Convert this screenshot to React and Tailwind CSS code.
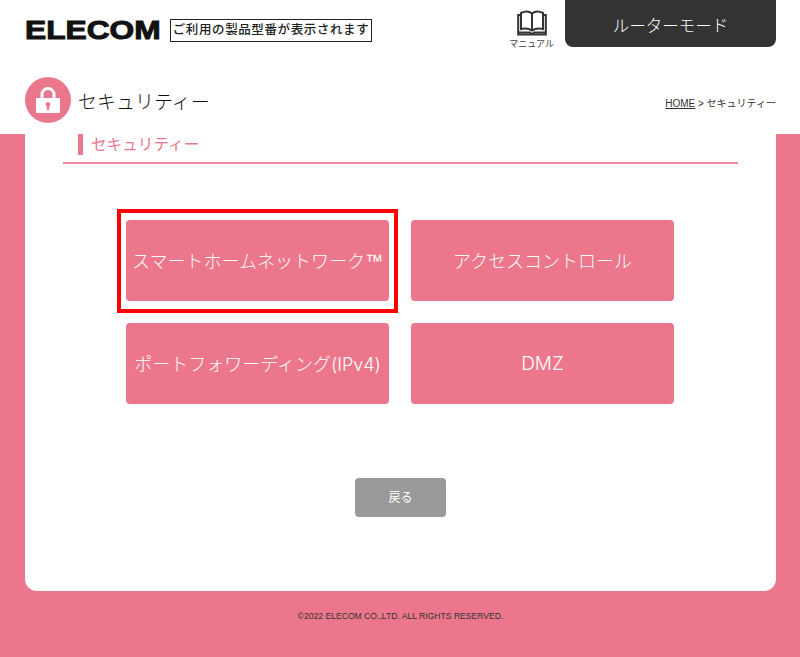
const font = "font-['Liberation_Sans','Noto_Sans_CJK_JP',sans-serif]";

function LockIcon() {
  return (
    <svg width="24" height="26" viewBox="0 0 24 26">
      <path d="M6 12V7.5a6 6 0 0 1 12 0V12" fill="none" stroke="#fff" strokeWidth="3" />
      <path
        fillRule="evenodd"
        fill="#fff"
        d="M1 11h22a1 1 0 0 1 1 1v13a1 1 0 0 1-1 1H1a1 1 0 0 1-1-1V12a1 1 0 0 1 1-1zM12 15a2.4 2.4 0 0 0-1.2 4.5V23h2.4v-3.5A2.4 2.4 0 0 0 12 15z"
      />
    </svg>
  );
}

function BookIcon() {
  return (
    <svg width="30" height="27" viewBox="0 0 30 27" fill="none" stroke="#333" strokeWidth="2">
      <path d="M4 4V20C8 19 12 19.5 15 21.5C18 19.5 22 19 26 20V4C22 2 18 2 15 4.5C12 2 8 2 4 4Z" />
      <path d="M15 4.5V21.5" />
      <path d="M4 6H1.2V25.5H28.8V6H26" />
      <path d="M1.2 23.5H13C14 25 16 25 17 23.5H28.8" />
    </svg>
  );
}

function MenuButton({ label, selected, big }) {
  return (
    <div className="relative">
      <button
        className={`flex h-[81px] w-full items-center justify-center whitespace-nowrap rounded bg-[#ec778c] pt-[2px] font-['Inter','Noto_Sans_CJK_JP',sans-serif] font-light text-white ${
          big ? "text-[19px]" : "text-[18px]"
        }`}
      >
        {label}
      </button>
      {selected && (
        <div className="absolute -top-[11px] -left-[9px] h-[104px] w-[281px] border-4 border-[#ff0000]"></div>
      )}
    </div>
  );
}

export default function App() {
  return (
    <div className={`flex h-[657px] w-[800px] flex-col overflow-hidden bg-white text-[#333] ${font}`}>
      <header className="h-[134px] shrink-0 pr-[24px] pl-[25px]">
        <div className="flex h-[77px] justify-between">
          <div className="flex items-start pt-[19px]">
            <span className="w-[136px] origin-left scale-x-[1.22] text-[26px] leading-[22px] font-bold text-[#111] [-webkit-text-stroke:1px_#111]">
              ELECOM
            </span>
            <span className="ml-[9px] flex h-[23px] w-[202px] items-center justify-center border border-[#222] text-[12.5px] leading-none font-medium tracking-[0.6px] whitespace-nowrap text-[#222]">
              ご利用の製品型番が表示されます
            </span>
          </div>
          <div className="flex items-start">
            <div className="mr-[11px] flex flex-col items-center pt-[9px]">
              <BookIcon />
              <span className="mt-[2px] text-[9px] leading-[12px] text-[#444]">マニュアル</span>
            </div>
            <div className="flex h-[47px] w-[211px] items-center justify-center rounded-b-lg bg-[#333] pt-[6px] text-[16.5px] font-light text-white">
              ルーターモード
            </div>
          </div>
        </div>
        <div className="flex items-start justify-between">
          <div className="flex items-start">
            <div className="flex h-[46px] w-[46px] items-center justify-center rounded-full bg-[#ec778c]">
              <LockIcon />
            </div>
            <h1 className="mt-[1px] ml-[7px] text-[19px] leading-[50px] font-light text-[#111]">セキュリティー</h1>
          </div>
          <div className="pt-[19px] text-[10px] leading-[16px]">
            <span className="underline">HOME</span> &gt; セキュリティー
          </div>
        </div>
      </header>

      <main className="flex flex-1 flex-col bg-[#ec778c] pr-[24px] pl-[25px]">
        <div className="h-[457px] shrink-0 rounded-b-xl bg-white px-[38px]">
          <div className="border-b-2 border-[#ee8a9c] pb-[7px] pl-[15px]">
            <h2 className="border-l-[5px] border-[#ec778c] pl-[8px] text-[15.6px] leading-[21px] font-normal text-[#ec778c]">
              セキュリティー
            </h2>
          </div>
          <div className="mt-[56px] mr-[64px] ml-[63px] grid grid-cols-2 gap-x-[22px] gap-y-[22px]">
            <MenuButton
              label={
                <>
                  スマートホームネットワーク<span className="font-['Liberation_Sans',sans-serif]">™</span>
                </>
              }
              selected
            />
            <MenuButton label="アクセスコントロール" />
            <MenuButton label="ポートフォワーディング(IPv4)" />
            <MenuButton label="DMZ" big />
          </div>
          <div className="mt-[74px] flex justify-center">
            <button className="h-[39px] w-[91px] rounded bg-[#999] text-[12px] text-white">戻る</button>
          </div>
        </div>
        <footer className="flex flex-1 items-center justify-center pb-[16px] text-[8.6px] text-[#333]">
          ©2022 ELECOM CO.,LTD. ALL RIGHTS RESERVED.
        </footer>
      </main>
    </div>
  );
}
